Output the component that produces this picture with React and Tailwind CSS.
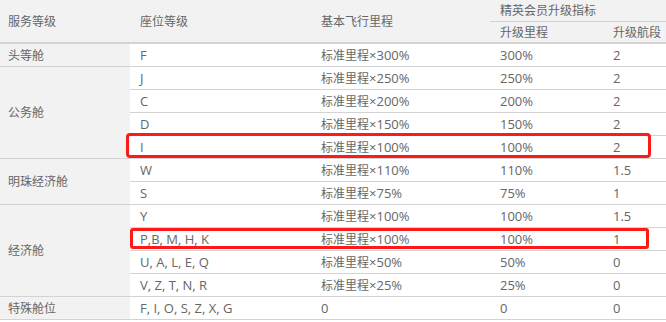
const FONT = '"Open Sans","Noto Sans CJK SC",sans-serif';

// CJK glyphs in the reference run a touch smaller than the latin text
const T = (s) =>
  s.split(/([\u4e00-\u9fff]+)/).map((p, i) =>
    /[\u4e00-\u9fff]/.test(p) ? (
      <span key={i} className="text-[12px] leading-none">{p}</span>
    ) : (
      p
    )
  );

const groups = [
  { name: "头等舱", rows: [["F", "标准里程×300%", "300%", "2"]] },
  {
    name: "公务舱",
    rows: [
      ["J", "标准里程×250%", "250%", "2"],
      ["C", "标准里程×200%", "200%", "2"],
      ["D", "标准里程×150%", "150%", "2"],
      ["I", "标准里程×100%", "100%", "2"],
    ],
  },
  {
    name: "明珠经济舱",
    rows: [
      ["W", "标准里程×110%", "110%", "1.5"],
      ["S", "标准里程×75%", "75%", "1"],
    ],
  },
  {
    name: "经济舱",
    rows: [
      ["Y", "标准里程×100%", "100%", "1.5"],
      ["P,B, M, H, K", "标准里程×100%", "100%", "1"],
      ["U, A, L, E, Q", "标准里程×50%", "50%", "0"],
      ["V, Z, T, N, R", "标准里程×25%", "25%", "0"],
    ],
  },
  { name: "特殊舱位", rows: [["F, I, O, S, Z, X, G", "0", "0", "0"]] },
];

export default function App() {
  return (
    <div className="relative w-[666px] h-[322px] bg-white overflow-hidden" style={{ fontFamily: FONT }}>
      <table className="w-[666px] border-collapse text-[13px] leading-[18px] text-[#666] table-fixed whitespace-nowrap">
        <colgroup>
          <col className="w-[130px]" />
          <col className="w-[181px]" />
          <col className="w-[179px]" />
          <col className="w-[113px]" />
          <col className="w-[63px]" />
        </colgroup>
        <thead className="bg-[#f2f2f2]">
          <tr className="h-[21px]">
            <th rowSpan={2} className="text-left font-normal pl-2 border-b-2 border-[#d3d3d3]">{T("服务等级")}</th>
            <th rowSpan={2} className="text-left font-normal pl-[10px] border-b-2 border-[#d3d3d3]">{T("座位等级")}</th>
            <th rowSpan={2} className="text-left font-normal pl-[10px] border-b-2 border-[#d3d3d3]">{T("基本飞行里程")}</th>
            <th colSpan={2} className="text-left font-normal pl-[10px] border-b border-[#d3d3d3]">{T("精英会员升级指标")}</th>
          </tr>
          <tr className="h-[22px]">
            <th className="text-left font-normal pl-[10px] border-b-2 border-[#d3d3d3]">{T("升级里程")}</th>
            <th className="text-left font-normal pl-[10px] border-b-2 border-[#d3d3d3]">{T("升级航段")}</th>
          </tr>
        </thead>
        <tbody>
          {groups.map((g) =>
            g.rows.map((r, i) => (
              <tr key={g.name + i} className="h-[23px] border-b border-[#d3d3d3]">
                {i === 0 && (
                  <td rowSpan={g.rows.length} className="bg-[#f2f2f2] pl-2 border-b border-[#d3d3d3]">
                    {T(g.name)}
                  </td>
                )}
                <td className="pl-[10px]">{r[0]}</td>
                <td className="pl-[10px]">{T(r[1])}</td>
                <td className="pl-[10px]">{r[2]}</td>
                <td className="pl-[10px]">{r[3]}</td>
              </tr>
            ))
          )}
        </tbody>
      </table>
      <div className="absolute left-[126px] top-[133px] w-[525px] h-[25px] border-[3px] border-[#ff1a1a] rounded-[4px]" />
      <div className="absolute left-[130px] top-[228px] w-[519px] h-[21px] border-[3px] border-[#ff1a1a] rounded-[3px]" />
    </div>
  );
}
